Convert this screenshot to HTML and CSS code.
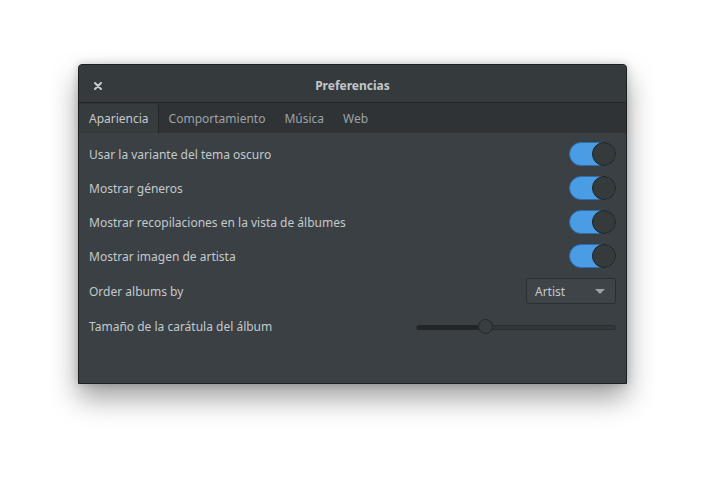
FILE: index.html
```html
<!DOCTYPE html>
<html lang="es">
<head>
<meta charset="utf-8">
<title>Preferencias</title>
<link rel="stylesheet" href="styles.css">
</head>
<body>
<div class="window">
  <header class="headerbar">
    <svg class="close" width="8" height="8" viewBox="0 0 8 8"><path d="M1 1 L7 7 M7 1 L1 7" stroke="#c8cccd" stroke-width="2" stroke-linecap="round"/></svg>
    <span class="title">Preferencias</span>
  </header>
  <nav class="tabs">
    <span class="tab active">Apariencia</span>
    <span class="tab">Comportamiento</span>
    <span class="tab">Música</span>
    <span class="tab">Web</span>
  </nav>
  <main class="content">
    <div class="row"><span class="label">Usar la variante del tema oscuro</span><span class="switch"><span class="knob"></span></span></div>
    <div class="row"><span class="label">Mostrar géneros</span><span class="switch"><span class="knob"></span></span></div>
    <div class="row"><span class="label">Mostrar recopilaciones en la vista de álbumes</span><span class="switch"><span class="knob"></span></span></div>
    <div class="row"><span class="label">Mostrar imagen de artista</span><span class="switch"><span class="knob"></span></span></div>
    <div class="row tall"><span class="label">Order albums by</span><span class="combo"><span>Artist</span><span class="arrow"></span></span></div>
    <div class="row"><span class="label">Tamaño de la carátula del álbum</span><span class="slider"><span class="fill"></span><span class="thumb"></span></span></div>
  </main>
</div>
</body>
</html>
```
FILE: styles.css
```css
html {
  margin: 0;
  padding: 0;
  min-height: 100%;
  background: #ffffff;
}
body {
  margin: 0;
  min-height: 477px;
  box-sizing: border-box;
  padding: 64px 0 0 78px;
  font-family: "Noto Sans", "Open Sans", sans-serif;
  font-size: 12px;
}
.window {
  width: 547px;
  height: 318px;
  border: 1px solid #1d2022;
  border-radius: 4px 4px 0 0;
  background: #3a4044;
  box-shadow: 0 14px 28px rgba(0, 0, 0, 0.38), 0 0 8px rgba(0, 0, 0, 0.18);
  display: flex;
  flex-direction: column;
  overflow: hidden;
}
.headerbar {
  height: 38px;
  flex-shrink: 0;
  box-sizing: border-box;
  padding-top: 4px;
  background: #353a3d;
  border-bottom: 1px solid #232628;
  display: flex;
  align-items: center;
  position: relative;
  color: #c3c7c9;
}
.close {
  margin-left: 15px;
}
.title {
  position: absolute;
  left: 0;
  right: 0;
  top: 4px;
  bottom: 0;
  display: flex;
  align-items: center;
  justify-content: center;
  font-weight: bold;
  pointer-events: none;
}
.tabs {
  height: 29px;
  flex-shrink: 0;
  background: #2f3336;
  display: flex;
  align-items: stretch;
  padding-top: 1px;
}
.tab {
  display: flex;
  align-items: center;
  padding: 0 9px 0 10px;
  color: #9da3a6;
}
.tab.active {
  background: #363b3e;
  color: #c6cacc;
  border-radius: 3px 3px 0 0;
  border-right: 1px solid #24282a;
}
.content {
  flex: 1;
  padding: 4px 10px 0 10px;
  display: flex;
  flex-direction: column;
  color: #c4c9cb;
}
.row {
  height: 34px;
  flex-shrink: 0;
  display: flex;
  align-items: center;
  justify-content: space-between;
}
.row.tall {
  height: 36px;
}
.switch {
  width: 47px;
  height: 24px;
  box-sizing: border-box;
  border-radius: 12px;
  background: #4a9ce4;
  border: 1px solid #2d6ea8;
  display: flex;
  justify-content: flex-end;
  align-items: center;
}
.knob {
  width: 24px;
  height: 24px;
  box-sizing: border-box;
  margin-right: -1px;
  border-radius: 50%;
  background: #353a3d;
  border: 1px solid #1f2325;
}
.combo {
  width: 90px;
  height: 26px;
  box-sizing: border-box;
  border: 1px solid #2b2f31;
  border-radius: 3px;
  background: #3e4448;
  display: flex;
  align-items: center;
  justify-content: space-between;
  padding: 0 10px 0 8px;
  color: #c4c9cb;
}
.arrow {
  width: 0;
  height: 0;
  border-left: 5px solid transparent;
  border-right: 5px solid transparent;
  border-top: 5px solid #9ca2a5;
}
.slider {
  width: 200px;
  height: 5px;
  border-radius: 3px;
  background: #32373a;
  border: 1px solid #2a2e30;
  box-sizing: border-box;
  position: relative;
  margin-top: 2px;
}
.fill {
  position: absolute;
  left: 0;
  top: -1px;
  width: 70px;
  height: 5px;
  border-radius: 3px 0 0 3px;
  background: #222628;
}
.thumb {
  position: absolute;
  left: 61px;
  top: -7px;
  width: 15px;
  height: 15px;
  box-sizing: border-box;
  border-radius: 50%;
  background: #393e41;
  border: 1px solid #24282a;
}
```
